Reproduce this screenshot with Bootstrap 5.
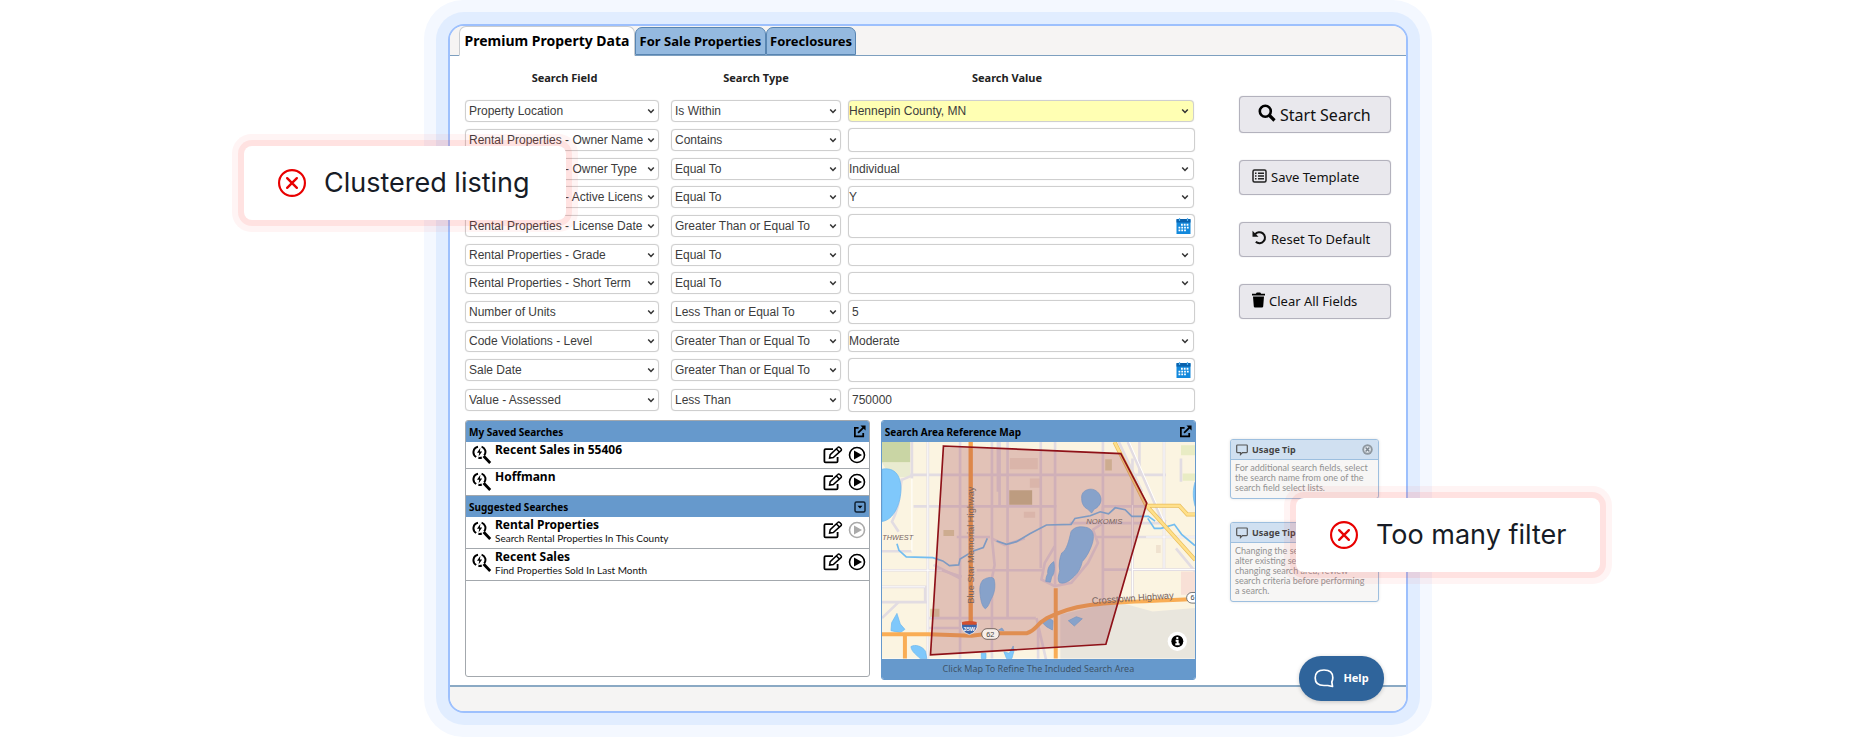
<!DOCTYPE html>
<html lang="en">
<head>
<meta charset="utf-8">
<meta name="viewport" content="width=device-width, initial-scale=1">
<title>Premium Property Data search</title>
<link href="https://cdn.jsdelivr.net/npm/bootstrap@5.3.0/dist/css/bootstrap.min.css" rel="stylesheet">
<style>
body { font-family: "Noto Sans", sans-serif; color: #000; background: #fff; overflow-x: hidden; }
svg { display: block; flex: none; }
.frame { max-width: 960px; border: 2px solid #9dc0fd; border-radius: 16px; background: #fff; box-shadow: 0 0 0 12px #e1edff, 0 0 0 24px #f4f8ff; }
.frame-inner { border-radius: 14px; overflow: hidden; }

/* tabs */
.tabbar { background: #f6f4f3; height: 30px; padding-left: 9px; border: 0; border-bottom: 1px solid #7d9fbf; flex-wrap: nowrap; align-items: flex-end; }
.tabbar .nav-link { height: 28px; padding: 0 3px; border: 1px solid #5885b2; border-radius: 7px 7px 0 0; background: #94b9df; color: #000; font-weight: 700; font-size: 13px; line-height: 24px; white-space: nowrap; margin: 0; min-width: 89px; }
.tabbar .nav-link.wide { min-width: 131px; }
.tabbar .nav-link.active { height: 30px; min-width: 176px; margin-bottom: -1px; font-size: 14px; line-height: 28px; background: #fff; border-color: #c9ccd0; border-bottom-color: #fff; }

/* search form */
.workarea { padding: 0 15px 5px; gap: 34px; }
.search-row { display: grid; grid-template-columns: 199fr 170fr 348fr; column-gap: 7px; align-items: center; margin-bottom: 6px; }
.search-head { font-size: 11px; font-weight: 700; line-height: 20px; padding-top: 12px; margin-bottom: 12px; text-align: center; color: #222; }
.search-head > :last-child { padding-right: 30px; }
.form-select.fld, .form-control.fld { font-family: "Liberation Sans", Arial, sans-serif; font-size: 12px; line-height: 16px; color: #3c3c3c; border: 1px solid #cfcfcf; border-radius: 4px; padding: 0 15px 0 3px; height: 22px; min-height: 0; box-shadow: 0 0 1px #d8d8d8; }
.form-select.fld { background: #fff url("data:image/svg+xml,%3Csvg xmlns='http://www.w3.org/2000/svg' viewBox='0 0 8 8'%3E%3Cpath d='M1.2 2.4 4 5.4 6.8 2.4' fill='none' stroke='%23333' stroke-width='1.5'/%3E%3C/svg%3E") no-repeat right 3px center / 8px 8px; }
.form-select.fld:first-child { width: auto; min-width: 0; margin-right: 5px; }
.form-select.val { padding-left: 0; margin-right: 2px; width: auto; background-position: right 4px center; }
.form-select.hot { background-color: #ffffb3; }
.form-control.fld { height: 24px; padding: 0 3px; width: auto; margin-right: 1px; }
.datebox { margin-right: 1px; }
.datebox .form-control.fld { width: 100%; margin: 0; }
.cal { right: 4px; top: 4px; }

/* panels */
.panels { gap: 11px; margin-top: 8px; }
.pane-box { min-width: 0; border: 1px solid #a3a8ad; border-radius: 3px; overflow: hidden; }
.pane-saved { flex: 405 1 0; min-height: 257px; }
.pane-map { flex: 315 1 0; border-color: #6699cc; }
.pane-title { background: #6699cc; height: 21px; padding: 0 3px; font-size: 10px; font-weight: 700; margin: 0; }
.ibtn { border: 0; background: none; padding: 0; color: #000; }
.ibtn:disabled { color: #aaa; }
.entry { border-bottom: 1px solid #a3a8ad; padding: 0 3px 0 6px; height: 27px; gap: 3px; }
.entry.tall { height: 32px; }
.entry .runs { gap: 5px; }
.entry .title { font-size: 12px; font-weight: 700; line-height: 16px; }
.entry .note { font-family: Lato, sans-serif; font-size: 10px; line-height: 10px; color: #111; }
.map-foot { background: #6699cc; color: #3e5468; font-size: 9px; line-height: 20px; text-align: center; }
.map-foot a { color: inherit; text-decoration: none; }

/* side column */
.side { width: 161px; flex: none; padding-top: 40px; }
.actions { gap: 27px; }
.act { width: 152px; height: 35px; padding: 0 12px; border: 1px solid #b3b2bd; border-radius: 4px; background: #e9e8ed; box-shadow: 0 0 1px #b3b2bd; font-size: 13px; gap: 4px; color: #111; }
.act.main { height: 37px; font-size: 16px; padding: 0 18px; }
.act svg { margin-bottom: 4px; }
.tips { margin-top: 120px; gap: 23px; }
.tip { width: 149px; border: 1px solid #9dbfdf; border-radius: 3px; background: #f7f6f5; overflow: hidden; box-shadow: 0 0 3px #e2e2e2; }
.tip-title { background: #d0e0f1; border-bottom: 1px solid #9dbfdf; height: 20px; font-size: 9px; font-weight: 700; color: #444; padding: 0 5px; }
.tip p { font-family: Lato, sans-serif; font-size: 9px; line-height: 10px; color: #929292; padding: 3px 4px 5px; margin: 0; white-space: nowrap; }

.footbar { height: 26px; background: #f5f4f3; border-top: 2px solid #8aa9c4; }
.help { position: absolute; right: 22px; bottom: 10px; width: 85px; height: 45px; border: 0; border-radius: 22px; background: #2f649b; color: #fff; font-size: 11px; font-weight: 700; box-shadow: 0 1px 4px rgba(0,0,0,.2); gap: 9px; }

/* callouts that lie over the frame */
.callout { position: absolute; height: 74px; border-radius: 8px; background: #fff; box-shadow: 0 0 0 6px rgba(255,70,60,.1), 0 0 0 12px rgba(255,70,60,.06); font-family: Inter, sans-serif; font-size: 27px; color: #171c26; gap: 18px; white-space: nowrap; padding: 0 34px; }
.callout-left { left: -206px; top: 120px; width: 322px; }
.callout-right { right: -194px; top: 472px; width: 304px; }
</style>
</head>
<body class="p-4">
<svg width="0" height="0" class="position-absolute" aria-hidden="true">
  <symbol id="i-zoom" viewBox="0 0 20 20"><path d="M6 1.7A5.6 5.6 0 0 0 4.2 12M9.6 1.6a5.6 5.6 0 0 1 2.6 8.800M6.400 12.800a5.600 5.600 0 0 0 3.400-.3" fill="none" stroke="#000" stroke-width="2"/><path d="M8.400 2.800 5 7.800h2.200L6.600 11.400l3.600-5H7.900z"/><path d="m11.600 11 6.600 7" stroke="#000" stroke-width="2.800"/></symbol>
  <symbol id="i-edit" viewBox="0 0 20 18"><path d="M10 3.200H2.600c-.8 0-1.200.5-1.200 1.200v10.800c0 .8.5 1.200 1.200 1.200h10.800c.8 0 1.200-.5 1.200-1.200V11" fill="none" stroke="currentColor" stroke-width="1.800"/><path d="m6.600 12 .6-3.400 7.600-7.100c.6-.6 1.400-.5 2 0l1.200 1.200c.6.6.6 1.300 0 1.900L10.300 11.500zM13.400 3l3 3" fill="none" stroke="currentColor" stroke-width="1.500"/></symbol>
  <symbol id="i-play" viewBox="0 0 18 18"><circle cx="9" cy="9" r="7.500" fill="none" stroke="currentColor" stroke-width="1.600"/><path d="M6 4.500 14 9l-8 4.500z" fill="currentColor"/></symbol>
  <symbol id="i-open" viewBox="0 0 14 14"><path d="M6 3H2v9.200h9V8.500" fill="none" stroke="currentColor" stroke-width="1.900"/><path d="m5.500 8.500 6-6" stroke="currentColor" stroke-width="2"/><path d="M8 .5h5.500V6z" fill="currentColor"/></symbol>
  <symbol id="i-cal" viewBox="0 0 14 16"><path d="M0 1.500h14V16H0z" fill="#1389dc"/><path d="M0 1h14v3.600H0z" fill="#0a62ad"/><path d="M3 0v3M11 0v3" stroke="#5ab6f2" stroke-width="1.200"/><path d="M4.500 6.800h8M2 9.600h10.500M2 12.400h8" stroke="#fff" stroke-width="1.900" stroke-dasharray="1.800 1"/></symbol>
  <symbol id="i-cross" viewBox="0 0 26 26"><circle cx="13" cy="13" r="12" fill="none" stroke="#e80000" stroke-width="2"/><path d="m8.500 8.500 9 9m0-9-9 9" stroke="#e80000" stroke-width="2.200" stroke-linecap="round"/></symbol>
  <symbol id="i-note" viewBox="0 0 12 12"><path d="M1.500 1h9q.8 0 .8.800v6q0 .8-.8.800H6.500L4.500 10.500V8.600h-3q-.8 0-.8-.8v-6q0-.8.8-.8z" fill="none" stroke="#555" stroke-width="1.200"/></symbol>
</svg>

<main class="frame position-relative mx-auto">
  <div class="frame-inner">
    <nav class="nav nav-tabs tabbar" aria-label="Data sets">
      <button type="button" class="nav-link active">Premium Property Data</button>
      <button type="button" class="nav-link wide">For Sale Properties</button>
      <button type="button" class="nav-link">Foreclosures</button>
    </nav>

    <div class="workarea d-flex">
      <div class="flex-grow-1">
        <form>
          <div class="search-row search-head"><span>Search Field</span><span>Search Type</span><span>Search Value</span></div>
          <div class="search-row">
            <select class="form-select fld" aria-label="Search field 1"><option>Property Location</option></select>
            <select class="form-select fld" aria-label="Search type 1"><option>Is Within</option></select>
            <select class="form-select fld val hot" aria-label="Search value 1"><option>Hennepin County, MN</option></select>
          </div>
          <div class="search-row">
            <select class="form-select fld" aria-label="Search field 2"><option>Rental Properties - Owner Name</option></select>
            <select class="form-select fld" aria-label="Search type 2"><option>Contains</option></select>
            <input class="form-control fld" type="text" aria-label="Search value 2">
          </div>
          <div class="search-row">
            <select class="form-select fld" aria-label="Search field 3"><option>Rental Properties - Owner Type</option></select>
            <select class="form-select fld" aria-label="Search type 3"><option>Equal To</option></select>
            <select class="form-select fld val" aria-label="Search value 3"><option>Individual</option></select>
          </div>
          <div class="search-row">
            <select class="form-select fld" aria-label="Search field 4"><option>Rental Properties - Active License</option></select>
            <select class="form-select fld" aria-label="Search type 4"><option>Equal To</option></select>
            <select class="form-select fld val" aria-label="Search value 4"><option>Y</option></select>
          </div>
          <div class="search-row">
            <select class="form-select fld" aria-label="Search field 5"><option>Rental Properties - License Date</option></select>
            <select class="form-select fld" aria-label="Search type 5"><option>Greater Than or Equal To</option></select>
            <div class="datebox position-relative"><input class="form-control fld" type="text" aria-label="Search value 5"><button type="button" class="ibtn cal position-absolute" aria-label="Pick license date"><svg width="15" height="16"><use href="#i-cal"/></svg></button></div>
          </div>
          <div class="search-row">
            <select class="form-select fld" aria-label="Search field 6"><option>Rental Properties - Grade</option></select>
            <select class="form-select fld" aria-label="Search type 6"><option>Equal To</option></select>
            <select class="form-select fld val" aria-label="Search value 6"><option></option></select>
          </div>
          <div class="search-row">
            <select class="form-select fld" aria-label="Search field 7"><option>Rental Properties - Short Term</option></select>
            <select class="form-select fld" aria-label="Search type 7"><option>Equal To</option></select>
            <select class="form-select fld val" aria-label="Search value 7"><option></option></select>
          </div>
          <div class="search-row">
            <select class="form-select fld" aria-label="Search field 8"><option>Number of Units</option></select>
            <select class="form-select fld" aria-label="Search type 8"><option>Less Than or Equal To</option></select>
            <input class="form-control fld" type="text" value="5" aria-label="Search value 8">
          </div>
          <div class="search-row">
            <select class="form-select fld" aria-label="Search field 9"><option>Code Violations - Level</option></select>
            <select class="form-select fld" aria-label="Search type 9"><option>Greater Than or Equal To</option></select>
            <select class="form-select fld val" aria-label="Search value 9"><option>Moderate</option></select>
          </div>
          <div class="search-row">
            <select class="form-select fld" aria-label="Search field 10"><option>Sale Date</option></select>
            <select class="form-select fld" aria-label="Search type 10"><option>Greater Than or Equal To</option></select>
            <div class="datebox position-relative"><input class="form-control fld" type="text" aria-label="Search value 10"><button type="button" class="ibtn cal position-absolute" aria-label="Pick sale date"><svg width="15" height="16"><use href="#i-cal"/></svg></button></div>
          </div>
          <div class="search-row">
            <select class="form-select fld" aria-label="Search field 11"><option>Value - Assessed</option></select>
            <select class="form-select fld" aria-label="Search type 11"><option>Less Than</option></select>
            <input class="form-control fld" type="text" value="750000" aria-label="Search value 11">
          </div>
        </form>

        <div class="panels d-flex align-items-start">
          <section class="pane-box pane-saved">
            <h2 class="pane-title d-flex align-items-center justify-content-between">My Saved Searches<button type="button" class="ibtn" aria-label="Open saved searches"><svg width="13" height="13"><use href="#i-open"/></svg></button></h2>
            <div class="entry d-flex align-items-center">
              <svg width="20" height="20"><use href="#i-zoom"/></svg>
              <div class="flex-grow-1 align-self-start title">Recent Sales in 55406</div>
              <div class="runs d-flex">
                <button type="button" class="ibtn" aria-label="Edit"><svg width="20" height="18"><use href="#i-edit"/></svg></button>
                <button type="button" class="ibtn" aria-label="Run"><svg width="18" height="18"><use href="#i-play"/></svg></button>
              </div>
            </div>
            <div class="entry d-flex align-items-center">
              <svg width="20" height="20"><use href="#i-zoom"/></svg>
              <div class="flex-grow-1 align-self-start title">Hoffmann</div>
              <div class="runs d-flex">
                <button type="button" class="ibtn" aria-label="Edit"><svg width="20" height="18"><use href="#i-edit"/></svg></button>
                <button type="button" class="ibtn" aria-label="Run"><svg width="18" height="18"><use href="#i-play"/></svg></button>
              </div>
            </div>
            <h2 class="pane-title d-flex align-items-center justify-content-between">Suggested Searches<button type="button" class="ibtn" aria-label="Collapse suggested searches"><svg width="12" height="12" viewBox="0 0 12 12"><rect x="1" y="1" width="10" height="10" rx="1.500" fill="none" stroke="#123" stroke-width="1.500"/><path d="M3.500 4.800h5L6 7.600z"/></svg></button></h2>
            <div class="entry tall d-flex align-items-start">
              <svg width="20" height="20" class="mt-1"><use href="#i-zoom"/></svg>
              <div class="flex-grow-1"><div class="title">Rental Properties</div><div class="note">Search Rental Properties In This County</div></div>
              <div class="runs d-flex mt-1">
                <button type="button" class="ibtn" aria-label="Edit"><svg width="20" height="18"><use href="#i-edit"/></svg></button>
                <button type="button" class="ibtn" aria-label="Run" disabled><svg width="18" height="18"><use href="#i-play"/></svg></button>
              </div>
            </div>
            <div class="entry tall d-flex align-items-start">
              <svg width="20" height="20" class="mt-1"><use href="#i-zoom"/></svg>
              <div class="flex-grow-1"><div class="title">Recent Sales</div><div class="note">Find Properties Sold In Last Month</div></div>
              <div class="runs d-flex mt-1">
                <button type="button" class="ibtn" aria-label="Edit"><svg width="20" height="18"><use href="#i-edit"/></svg></button>
                <button type="button" class="ibtn" aria-label="Run"><svg width="18" height="18"><use href="#i-play"/></svg></button>
              </div>
            </div>
          </section>

          <section class="pane-box pane-map">
            <h2 class="pane-title d-flex align-items-center justify-content-between">Search Area Reference Map<button type="button" class="ibtn" aria-label="Open map"><svg width="13" height="13"><use href="#i-open"/></svg></button></h2>
            <svg width="100%" viewBox="35 130 943 652" role="img" aria-label="Map of the search area">
              <path d="M35 130h943v652H35z" fill="#fbf4e1"/>
              <path d="M35 130h85v62H35z" fill="#c9d5a4"/><path d="M35 192h85v44H60z" fill="#e9ebd0"/>
              <path d="M935 140h43v30h-43zM940 225h38v22h-38z" fill="#e9ecc4"/>
              <path d="M935 520h43v70h-43z" fill="#f8e0d6"/>
              <path d="M572 650 740 610l110 30 128-10v152H572z" fill="#e9e6dd"/>
              <path d="M418 275h69v44h-69z" fill="#c9c096"/><path d="M220 395h32v18h-32zM180 632h28v28h-28zM707 182h20v34h-20z" fill="#dfd6ac"/>
              <path d="M420 178h84v34h-84zM480 240h36v28h-36zM860 440h14v24h-14zM462 340h34v18h-34z" fill="#f0e2cf"/>
              <g fill="none" stroke="#e2dce2" stroke-width="8">
                <path d="M125 130v110M173 130v652M270 130v652M366 130v290l8 80-8 40v242M389 130v190M413 130v530M513 130v380M556 130v430M700 130v480M789 180v420M810 130v100M884 130v380M935 180v70M384 130v150"/>
                <path d="M120 229h770M130 324h430M700 324h130M260 416h100M600 374h290M680 416h298M35 516h180l60 20M320 516h200M700 514h278M35 566h130v45M35 612h140M173 660h325M173 690h120M35 459h90M130 229l-35 15"/>
                <path d="M95 240c-10 50-5 80-30 130l20 30M35 660l50-48M365 420l40 20 60-20M700 324v50l-30 20 15 40-30 60-50 60-50 10-40-20 10-50 30-50"/>
                <path d="m775 130 105 240M748 130l70 150M830 330l60 40M920 450l58 70M500 660l30 130M190 500l80 40M505 690v92"/>
              </g>
              <g fill="none" stroke="#fff" stroke-width="3"><path d="M125 240v220M173 130v652M789 320v280M884 130v380M780 130l105 240M35 516h180M790 514h188M830 416h148M35 566h130"/></g>
              <g fill="#7fc8fb" stroke="#66b5ee" stroke-width="2">
                <path d="M35 212c30-6 56 10 57 56s-22 98-57 101z"/>
                <path d="M636 300c-2-20 14-28 28-28s28 12 30 28-10 28-20 32l-8 12-12-12c-10-4-18-16-18-32z"/>
                <path d="M604 400c12-18 34-16 50-12 20 8 20 28 14 48-6 18-16 40-30 54-4 18-12 34-24 44-14 14-28 24-44 20-8-8-4-22 0-36-4-20 0-40 6-54 16-8 22-40 28-64z"/>
                <path d="M552 490c4 20 2 38-6 46l-4 16-14-2c0-10 2-16 6-24-2-14 6-28 18-36z"/>
                <path d="M338 546c12-8 28-12 34-4 6 20 2 44-8 60-6 12-8 24-18 30-10-6-14-26-16-46-2-16 0-30 8-40z"/>
                <path d="m80 646 10 32 14 16-14 10-28-6 2-24zM512 668l28-6 10 6-2 28-18-10zM596 668l24-12 18 6-24 22z"/>
                <path d="M122 746c12-8 34-2 44 14l4 22h-20c-12-12-26-20-28-36zM402 762l16 4 12-22 2 16-6 22h-16zM334 766h14v16h-14zM386 696l10-6 6 8zM978 250c-8 20-8 50 0 74z"/>
              </g>
              <path d="M80 436l6 20 22 20 80 2 30 10 20 14 28-2 4-18 40-24 30-10 12-28M380 428l30 10 30-8 40-24 50-26 74-2 12-18 46-8 30-12 25 6 20-18 30 6 20 20h50l20 14M835 360l20 30h20l40-12 22 30 40 34" fill="none" stroke="#72bdf0" stroke-width="5"/>
              <g fill="none">
                <path d="M302 130v545" stroke="#f5a34c" stroke-width="13"/>
                <path d="M35 709h140l130 4 60-7h105q18-6 30-20t32-26q60-30 120-38c90-14 180-10 326-20M558 570v212M104 712v70" stroke="#f9ad55" stroke-width="12"/>
                <path d="m735 130 95 190 148 165M830 322h100l24 26h24" stroke="#e9bd5a" stroke-width="12"/>
                <path d="m735 130 95 190 148 165M830 322h100l24 26h24" stroke="#ffe08a" stroke-width="8"/>
              </g>
              <path d="M220 142 754 165l78 149L709 739 181 771z" fill="#a03a46" fill-opacity=".27" stroke="#8e1118" stroke-width="5"/>
              <g font-family="Liberation Sans, Arial, sans-serif" fill="#77645f">
                <text transform="translate(312 617) rotate(-90)" font-size="28">Blue Star Memorial Highway</text>
                <text transform="translate(667 618) rotate(-4)" font-size="28">Crosstown Highway</text>
                <text x="650" y="377" font-size="23" font-style="italic">NOKOMIS</text>
                <text x="36" y="425" font-size="22" font-style="italic">THWEST</text>
              </g>
              <path d="M274 676q24-8 48 0 2 26-24 34-26-8-24-34z" fill="#3d65a8" stroke="#fff" stroke-width="2"/><path d="M276 672q22-6 44 0v8h-44z" fill="#d2502f"/>
              <text x="298" y="699" font-family="Liberation Sans, Arial, sans-serif" font-size="17" font-weight="700" fill="#fff" text-anchor="middle">35W</text>
              <rect x="335" y="692" width="53" height="32" rx="16" fill="#f7efe9" stroke="#75655f" stroke-width="3"/>
              <text x="361" y="716" font-family="Liberation Sans, Arial, sans-serif" font-size="22" fill="#444" text-anchor="middle">62</text>
              <rect x="952" y="583" width="53" height="32" rx="16" fill="#fff" stroke="#777" stroke-width="3"/>
              <text x="964" y="607" font-family="Liberation Sans, Arial, sans-serif" font-size="22" fill="#444">6</text>
              <circle cx="924" cy="730" r="29" fill="#fff"/><circle cx="924" cy="730" r="18"/><path d="M924 717v6M919 728h6v11m-7 0h13" stroke="#fff" stroke-width="6" fill="none"/>
            </svg>
            <div class="map-foot"><a href="#refine">Click Map To Refine The Included Search Area</a></div>
          </section>
        </div>
      </div>

      <aside class="side">
        <div class="actions d-flex flex-column align-items-end">
          <button type="button" class="act main d-flex align-items-center"><svg width="18" height="18" viewBox="0 0 18 18"><circle cx="7.300" cy="7.300" r="5.500" fill="none" stroke="#000" stroke-width="2.600"/><path d="m11.500 11.500 5 5" stroke="#000" stroke-width="3.200"/></svg>Start Search</button>
          <button type="button" class="act d-flex align-items-center"><svg width="15" height="14" viewBox="0 0 15 14"><rect x="1" y="1" width="13" height="12" rx="1.500" fill="none" stroke="#222" stroke-width="1.500"/><path d="M3 4.200h1.500M6 4.200h6M3 7h1.500M6 7h6M3 9.800h1.500M6 9.800h6" stroke="#222" stroke-width="1.400"/></svg>Save Template</button>
          <button type="button" class="act d-flex align-items-center"><svg width="15" height="15" viewBox="0 0 15 15"><path d="M3 4.500a5.500 5.500 0 1 1 .8 7.300" fill="none" stroke="#111" stroke-width="2"/><path d="M.5.800v6h6z" fill="#111"/></svg>Reset To Default</button>
          <button type="button" class="act d-flex align-items-center"><svg width="13" height="16" viewBox="0 0 13 16"><path d="M0 1.800h3.800L4.800.5h3.400l1 1.300H13v1.800H0zM1 4.400h11l-.8 10q-.1 1.100-1.200 1.100H3q-1.100 0-1.200-1.100z"/></svg>Clear All Fields</button>
        </div>
        <div class="tips d-flex flex-column">
          <div class="tip">
            <div class="tip-title d-flex align-items-center gap-1"><svg width="12" height="12"><use href="#i-note"/></svg><span class="flex-grow-1">Usage Tip</span><button type="button" class="ibtn" aria-label="Close tip"><svg width="11" height="11" viewBox="0 0 11 11"><circle cx="5.500" cy="5.500" r="5.200" fill="#8e979f"/><circle cx="5.500" cy="5.500" r="3.300" fill="#e5ebf1"/><path d="m3.600 3.600 3.800 3.800m0-3.800L3.600 7.400" stroke="#7b848c" stroke-width="1.400"/></svg></button></div>
            <p>For additional search fields, select<br>the search name from one of the<br>search field select lists.</p>
          </div>
          <div class="tip">
            <div class="tip-title d-flex align-items-center gap-1"><svg width="12" height="12"><use href="#i-note"/></svg><span class="flex-grow-1">Usage Tip</span></div>
            <p>Changing the search area will<br>alter existing searches. After<br>changing search area, review<br>search criteria before performing<br>a search.</p>
          </div>
        </div>
      </aside>
    </div>
    <div class="footbar"></div>
  </div>

  <button type="button" class="help d-flex align-items-center justify-content-center"><svg width="20" height="19" viewBox="0 0 20 19"><path d="M18.500 17.500 17.800 13q1-2 1-4.200Q18.800 1 10 1T1.200 9Q1.200 16.500 10 16.500h3.800z" fill="none" stroke="#fff" stroke-width="1.700" stroke-linejoin="round"/></svg>Help</button>

  <div class="callout callout-left d-flex align-items-center"><svg width="28" height="28"><use href="#i-cross"/></svg>Clustered listing</div>
  <div class="callout callout-right d-flex align-items-center"><svg width="28" height="28"><use href="#i-cross"/></svg>Too many filter</div>
</main>
<script src="https://cdn.jsdelivr.net/npm/bootstrap@5.3.0/dist/js/bootstrap.bundle.min.js"></script>
</body>
</html>
